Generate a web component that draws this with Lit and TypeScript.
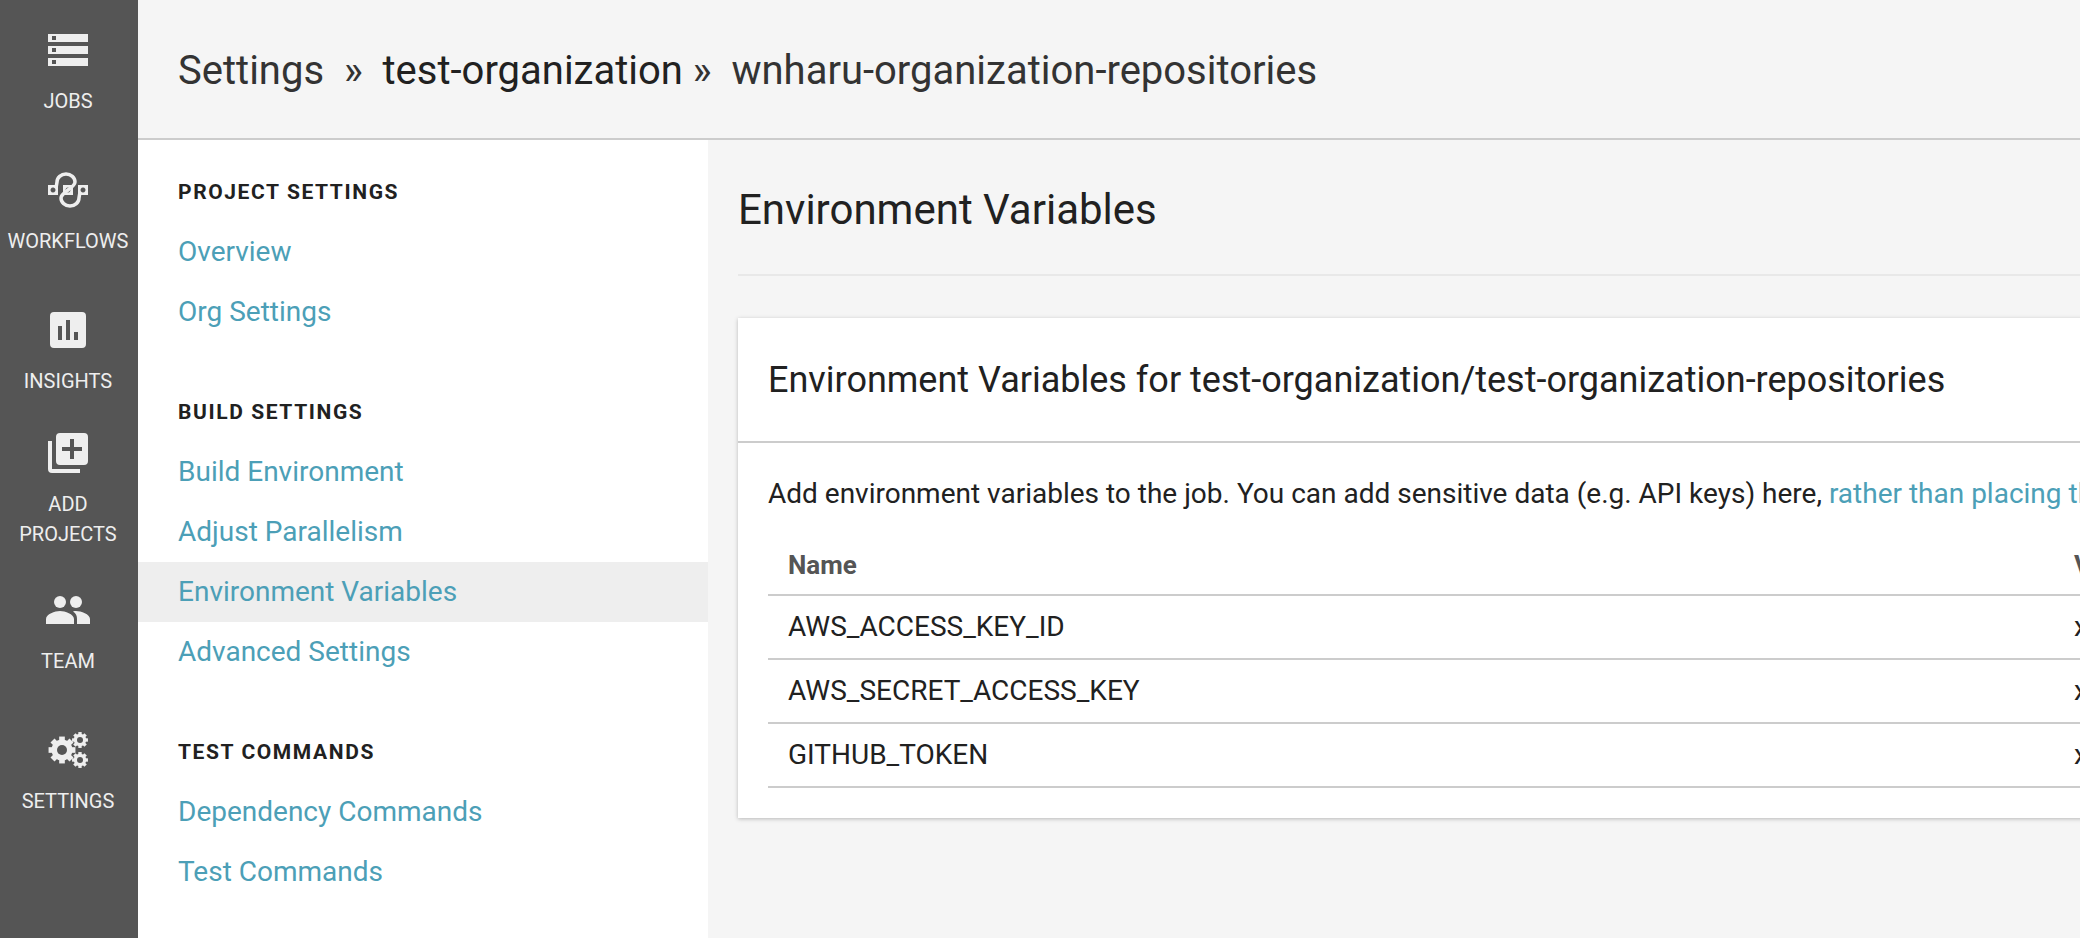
import {css, html, LitElement, svg} from 'lit';
import {customElement} from 'lit/decorators.js';

const gear = (cx: number, cy: number, r: number, hole: number, teeth: number) => {
  const parts = [];
  for (let i = 0; i < teeth; i++) {
    const a = (i * 360) / teeth;
    parts.push(svg`<rect x=${cx - r * 0.27} y=${cy - r * 1.28} width=${r * 0.54} height=${r * 0.6} transform="rotate(${a} ${cx} ${cy})"></rect>`);
  }
  return svg`<g fill="#eee">${parts}<circle cx=${cx} cy=${cy} r=${r}></circle></g><circle cx=${cx} cy=${cy} r=${hole} fill="#555"></circle>`;
};

const icons = {
  jobs: html`<svg width="40" height="32" viewBox="0 0 40 32">
    <path fill="#eee" fill-rule="evenodd" d="M0 0h40v8H0zM4 2v4h4V2zM0 12h40v8H0zM4 14v4h4v-4zM0 24h40v8H0zM4 26v4h4v-4z"></path>
  </svg>`,
  workflows: html`<svg width="40" height="40" viewBox="0 0 40 40">
    <path fill="none" stroke="#eee" stroke-width="3.500" d="M8 18 L9 12 A9 8 0 0 1 27 12 C27 18 13 22 13 28 A9 8 0 0 0 31 28 L32 22"></path>
    <path fill="#eee" fill-rule="evenodd" d="M0 15h10v10H0zM5 17.500a2.500 2.500 0 1 0 .01 0zM15 15h10v10H15zM20 17.500a2.500 2.500 0 1 0 .01 0zM30 15h10v10H30zM35 17.500a2.500 2.500 0 1 0 .01 0z"></path>
  </svg>`,
  insights: html`<svg width="36" height="36" viewBox="0 0 36 36">
    <path fill="#eee" fill-rule="evenodd" d="M4 0h28a4 4 0 0 1 4 4v28a4 4 0 0 1-4 4H4a4 4 0 0 1-4-4V4a4 4 0 0 1 4-4zM8 14v14h4V14zM16 8v20h4V8zM24 20v8h4v-8z"></path>
  </svg>`,
  add: html`<svg width="40" height="40" viewBox="0 0 40 40">
    <path fill="#eee" fill-rule="evenodd" d="M0 8h4v28h28v4H4a4 4 0 0 1-4-4zM12 0h24a4 4 0 0 1 4 4v24a4 4 0 0 1-4 4H12a4 4 0 0 1-4-4V4a4 4 0 0 1 4-4zM22 6v8h-8v4h8v8h4v-8h8v-4h-8V6z"></path>
  </svg>`,
  team: html`<svg width="44" height="28" viewBox="0 0 44 28">
    <circle cx="14" cy="6" r="6" fill="#eee"></circle>
    <circle cx="30" cy="6" r="6" fill="#eee"></circle>
    <path fill="#eee" d="M0 28v-5c0-5 9-8 14-8s14 3 14 8v5zM30 15c5 0 14 3 14 8v5H31v-5c0-3-1-6-4-7.600 1-.3 2-.4 3-.4z"></path>
  </svg>`,
  settings: html`<svg width="40" height="38" viewBox="0 0 40 38">
    ${gear(14, 19, 10.500, 5, 8)}
    ${gear(32, 9, 6.200, 3, 8)}
    ${gear(32, 29, 6.200, 3, 8)}
  </svg>`,
};

const navItems = [
  {icon: icons.jobs, label: ['JOBS'], cls: 'jobs'},
  {icon: icons.workflows, label: ['WORKFLOWS'], cls: 'workflows'},
  {icon: icons.insights, label: ['INSIGHTS'], cls: 'insights'},
  {icon: icons.add, label: ['ADD', 'PROJECTS'], cls: 'add'},
  {icon: icons.team, label: ['TEAM'], cls: 'team'},
  {icon: icons.settings, label: ['SETTINGS'], cls: 'settings'},
];

const menu = [
  {title: 'PROJECT SETTINGS', links: ['Overview', 'Org Settings']},
  {title: 'BUILD SETTINGS', links: ['Build Environment', 'Adjust Parallelism', 'Environment Variables', 'Advanced Settings']},
  {title: 'TEST COMMANDS', links: ['Dependency Commands', 'Test Commands']},
];

const vars = ['AWS_ACCESS_KEY_ID', 'AWS_SECRET_ACCESS_KEY', 'GITHUB_TOKEN'];

@customElement('app-root')
export class AppRoot extends LitElement {
  static override styles = css`
    :host {
      display: flex;
      width: 2080px;
      height: 938px;
      overflow: hidden;
      font-family: Roboto, sans-serif;
      color: #212121;
      background: #f5f5f5;
    }

    .rail {
      flex: 0 0 138px;
      background: #555;
      display: flex;
      flex-direction: column;
      color: #eee;
      font-size: 20px;
      line-height: 30px;
    }
    .rail-item {
      width: 136px;
      box-sizing: border-box;
      padding-top: 30px;
      height: 140px;
      display: flex;
      flex-direction: column;
      align-items: center;
      text-align: center;
    }
    .rail-icon {
      height: 40px;
      display: flex;
      align-items: center;
      justify-content: center;
    }
    .insights { height: 123px; }
    .add { height: 157px; }
    .rail-label { margin-top: 16px; }

    .body {
      flex: 1;
      min-width: 0;
      display: flex;
      flex-direction: column;
    }
    .crumbs {
      flex: none;
      box-sizing: border-box;
      border-bottom: 2px solid #ccc;
      height: 140px;
      padding: 47px 0 0 40px;
      font-size: 40px;
      line-height: 48px;
      font-weight: 400;
      white-space: pre;
      color: #333;
    }
    .crumbs span { color: #212121; }

    .columns {
      flex: 1;
      min-height: 0;
      display: flex;
    }
    .subnav {
      flex: 0 0 570px;
      background: #fff;
      padding-top: 38px;
      box-sizing: border-box;
    }
    .group { margin-bottom: 56px; }
    .group h3 {
      margin: 0 0 16px;
      padding-left: 40px;
      font-size: 21px;
      line-height: 28px;
      font-weight: 700;
      letter-spacing: 1.600px;
    }
    .group a {
      display: block;
      padding-left: 40px;
      font-size: 28px;
      line-height: 60px;
      color: #4c9fb7;
    }
    .group a.on { background: #eee; }

    .main {
      flex: 1;
      min-width: 0;
      padding-left: 30px;
      overflow: hidden;
    }
    .main h1 {
      margin: 0;
      padding-top: 46px;
      height: 88px;
      font-size: 42px;
      line-height: 48px;
      font-weight: 400;
      border-bottom: 2px solid #e8e8e8;
      width: 1500px;
    }
    .card {
      margin-top: 42px;
      width: 1500px;
      height: 500px;
      background: #fff;
      box-shadow: 0 1px 4px rgba(0, 0, 0, 0.25);
    }
    .card h2 {
      margin: 0;
      padding: 41px 0 0 30px;
      height: 82px;
      font-size: 36px;
      line-height: 42px;
      font-weight: 400;
      border-bottom: 2px solid #ccc;
      white-space: nowrap;
    }
    .desc {
      margin: 35px 0 0 30px;
      font-size: 28px;
      line-height: 32px;
      white-space: nowrap;
    }
    .desc a { color: #4c9fb7; }
    .table {
      margin: 39px 0 0 30px;
      width: 1470px;
    }
    .row {
      display: grid;
      grid-template-columns: 1286px 1fr;
      box-sizing: border-box;
      height: 64px;
      padding: 15px 0 0 20px;
      font-size: 28px;
      line-height: 32px;
      border-bottom: 2px solid #ccc;
    }
    .head {
      height: 47px;
      padding-top: 0;
      font-size: 26px;
      font-weight: 700;
      color: #555;
    }
  `;

  override render() {
    return html`
      <nav class="rail">
        ${navItems.map(
          (n) => html`<div class="rail-item ${n.cls}">
            <div class="rail-icon">${n.icon}</div>
            <div class="rail-label">${n.label.map((l) => html`<div>${l}</div>`)}</div>
          </div>`
        )}
      </nav>
      <div class="body">
        <header class="crumbs">Settings  »  <span>test-organization</span> »  wnharu-organization-repositories</header>
        <div class="columns">
          <aside class="subnav">
            ${menu.map(
              (g) => html`<div class="group">
                <h3>${g.title}</h3>
                ${g.links.map((l) => html`<a class=${l === 'Environment Variables' ? 'on' : ''}>${l}</a>`)}
              </div>`
            )}
          </aside>
          <main class="main">
            <h1>Environment Variables</h1>
            <section class="card">
              <h2>Environment Variables for test-organization/test-organization-repositories</h2>
              <p class="desc">Add environment variables to the job. You can add sensitive data (e.g. API keys) here, <a>rather than placing them in the repository.</a></p>
              <div class="table">
                <div class="row head"><span>Name</span><span>Value</span></div>
                ${vars.map((v) => html`<div class="row"><span>${v}</span><span>xxxx</span></div>`)}
              </div>
            </section>
          </main>
        </div>
      </div>
    `;
  }
}
